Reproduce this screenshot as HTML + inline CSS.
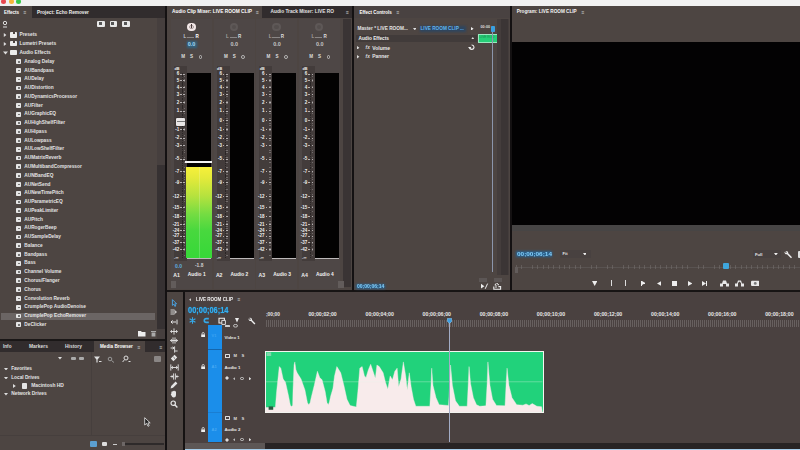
<!DOCTYPE html>
<html><head><meta charset="utf-8"><title>Premiere</title>
<style>
html,body{margin:0;padding:0;background:#4d4542;}
#app{position:relative;width:800px;height:450px;overflow:hidden;background:#4d4542;font-family:"Liberation Sans",sans-serif;}
#app div,#app span,#app svg{position:absolute;display:block;}
#app span{white-space:nowrap;}
</style></head><body><div id="app">
<div style="left:0.00px;top:0.00px;width:800.00px;height:5.60px;background:#f1f1f1;"></div>
<div style="left:0.50px;top:-1.00px;width:5.00px;height:5.00px;background:#e8484f;border-radius:50%;filter:blur(.4px);"></div>
<div style="left:8.50px;top:-1.00px;width:5.00px;height:5.00px;background:#f5b63a;border-radius:50%;filter:blur(.4px);"></div>
<div style="left:16.00px;top:-1.00px;width:5.00px;height:5.00px;background:#37c84a;border-radius:50%;filter:blur(.4px);"></div>
<div style="left:0.00px;top:5.60px;width:165.00px;height:12.00px;background:#312c2d;"></div>
<div style="left:0.00px;top:6.00px;width:32.00px;height:11.60px;background:#4d4542;"></div>
<div style="left:157.00px;top:17.60px;width:8.00px;height:321.00px;background:#463f3e;"></div>
<span style="left:4.00px;top:9.60px;font-size:4.50px;line-height:5.40px;color:#fff;font-weight:bold;">Effects</span>
<span style="left:23.50px;top:9.30px;font-size:5.00px;line-height:6.00px;color:#ccc;">≡</span>
<span style="left:37.00px;top:9.96px;font-size:4.73px;line-height:5.67px;color:#eee;font-weight:bold;">Project: Echo Remover</span>
<svg style="left:1.5px;top:20px" width="6" height="8" viewBox="0 0 6 8"><circle cx="3" cy="3" r="1.7" fill="none" stroke="#ddd" stroke-width="1"/><path d="M1 7h4" stroke="#ddd" stroke-width="1"/></svg>
<div style="left:97.00px;top:20.50px;width:7.50px;height:6.00px;background:#e8e8e8;border-radius:1px;"></div>
<div style="left:98.50px;top:22.00px;width:3.00px;height:2.50px;background:#555;"></div>
<div style="left:109.50px;top:20.50px;width:7.50px;height:6.00px;background:#e8e8e8;border-radius:1px;"></div>
<div style="left:111.00px;top:22.00px;width:3.00px;height:2.50px;background:#555;"></div>
<div style="left:122.00px;top:20.50px;width:7.50px;height:6.00px;background:#e8e8e8;border-radius:1px;"></div>
<div style="left:123.50px;top:22.00px;width:3.00px;height:2.50px;background:#555;"></div>
<span style="left:19.50px;top:32.29px;font-size:4.85px;line-height:5.82px;color:#e4e4e4;font-weight:bold;">Presets</span>
<div style="left:10.00px;top:32.40px;width:6.50px;height:5.20px;background:#ececec;border-radius:.8px;"></div>
<svg style="left:3px;top:33.20px" width="4" height="4" viewBox="0 0 4 4"><path d="M.8 0L3.4 2L.8 4z" fill="#ddd"/></svg>
<div style="left:12.50px;top:31.60px;width:2.00px;height:2.20px;background:#4d4542;"></div>
<span style="left:19.50px;top:41.06px;font-size:4.85px;line-height:5.82px;color:#e4e4e4;font-weight:bold;">Lumetri Presets</span>
<div style="left:10.00px;top:41.17px;width:6.50px;height:5.20px;background:#ececec;border-radius:.8px;"></div>
<svg style="left:3px;top:41.97px" width="4" height="4" viewBox="0 0 4 4"><path d="M.8 0L3.4 2L.8 4z" fill="#ddd"/></svg>
<div style="left:12.50px;top:40.37px;width:2.00px;height:2.20px;background:#4d4542;"></div>
<span style="left:19.50px;top:49.83px;font-size:4.85px;line-height:5.82px;color:#e4e4e4;font-weight:bold;">Audio Effects</span>
<div style="left:10.00px;top:49.94px;width:6.50px;height:5.20px;background:#ececec;border-radius:.8px;"></div>
<svg style="left:3px;top:51.14px" width="5" height="4" viewBox="0 0 5 4"><path d="M0 .5h5L2.5 3.6z" fill="#ddd"/></svg>
<span style="left:24.30px;top:58.73px;font-size:4.78px;line-height:5.74px;color:#e4e4e4;font-weight:bold;">Analog Delay</span>
<div style="left:16.30px;top:59.20px;width:4.60px;height:4.80px;background:#e6e6e6;border-radius:.8px;"></div>
<div style="left:17.50px;top:61.00px;width:2.20px;height:1.60px;background:#777;"></div>
<span style="left:24.30px;top:67.50px;font-size:4.78px;line-height:5.74px;color:#e4e4e4;font-weight:bold;">AUBandpass</span>
<div style="left:16.30px;top:67.97px;width:4.60px;height:4.80px;background:#e6e6e6;border-radius:.8px;"></div>
<div style="left:17.50px;top:69.77px;width:2.20px;height:1.60px;background:#777;"></div>
<span style="left:24.30px;top:76.27px;font-size:4.78px;line-height:5.74px;color:#e4e4e4;font-weight:bold;">AUDelay</span>
<div style="left:16.30px;top:76.74px;width:4.60px;height:4.80px;background:#e6e6e6;border-radius:.8px;"></div>
<div style="left:17.50px;top:78.54px;width:2.20px;height:1.60px;background:#777;"></div>
<span style="left:24.30px;top:85.04px;font-size:4.78px;line-height:5.74px;color:#e4e4e4;font-weight:bold;">AUDistortion</span>
<div style="left:16.30px;top:85.51px;width:4.60px;height:4.80px;background:#e6e6e6;border-radius:.8px;"></div>
<div style="left:17.50px;top:87.31px;width:2.20px;height:1.60px;background:#777;"></div>
<span style="left:24.30px;top:93.81px;font-size:4.78px;line-height:5.74px;color:#e4e4e4;font-weight:bold;">AUDynamicsProcessor</span>
<div style="left:16.30px;top:94.28px;width:4.60px;height:4.80px;background:#e6e6e6;border-radius:.8px;"></div>
<div style="left:17.50px;top:96.08px;width:2.20px;height:1.60px;background:#777;"></div>
<span style="left:24.30px;top:102.58px;font-size:4.78px;line-height:5.74px;color:#e4e4e4;font-weight:bold;">AUFilter</span>
<div style="left:16.30px;top:103.05px;width:4.60px;height:4.80px;background:#e6e6e6;border-radius:.8px;"></div>
<div style="left:17.50px;top:104.85px;width:2.20px;height:1.60px;background:#777;"></div>
<span style="left:24.30px;top:111.35px;font-size:4.78px;line-height:5.74px;color:#e4e4e4;font-weight:bold;">AUGraphicEQ</span>
<div style="left:16.30px;top:111.82px;width:4.60px;height:4.80px;background:#e6e6e6;border-radius:.8px;"></div>
<div style="left:17.50px;top:113.62px;width:2.20px;height:1.60px;background:#777;"></div>
<span style="left:24.30px;top:120.12px;font-size:4.78px;line-height:5.74px;color:#e4e4e4;font-weight:bold;">AUHighShelfFilter</span>
<div style="left:16.30px;top:120.59px;width:4.60px;height:4.80px;background:#e6e6e6;border-radius:.8px;"></div>
<div style="left:17.50px;top:122.39px;width:2.20px;height:1.60px;background:#777;"></div>
<span style="left:24.30px;top:128.89px;font-size:4.78px;line-height:5.74px;color:#e4e4e4;font-weight:bold;">AUHipass</span>
<div style="left:16.30px;top:129.36px;width:4.60px;height:4.80px;background:#e6e6e6;border-radius:.8px;"></div>
<div style="left:17.50px;top:131.16px;width:2.20px;height:1.60px;background:#777;"></div>
<span style="left:24.30px;top:137.66px;font-size:4.78px;line-height:5.74px;color:#e4e4e4;font-weight:bold;">AULowpass</span>
<div style="left:16.30px;top:138.13px;width:4.60px;height:4.80px;background:#e6e6e6;border-radius:.8px;"></div>
<div style="left:17.50px;top:139.93px;width:2.20px;height:1.60px;background:#777;"></div>
<span style="left:24.30px;top:146.43px;font-size:4.78px;line-height:5.74px;color:#e4e4e4;font-weight:bold;">AULowShelfFilter</span>
<div style="left:16.30px;top:146.90px;width:4.60px;height:4.80px;background:#e6e6e6;border-radius:.8px;"></div>
<div style="left:17.50px;top:148.70px;width:2.20px;height:1.60px;background:#777;"></div>
<span style="left:24.30px;top:155.20px;font-size:4.78px;line-height:5.74px;color:#e4e4e4;font-weight:bold;">AUMatrixReverb</span>
<div style="left:16.30px;top:155.67px;width:4.60px;height:4.80px;background:#e6e6e6;border-radius:.8px;"></div>
<div style="left:17.50px;top:157.47px;width:2.20px;height:1.60px;background:#777;"></div>
<span style="left:24.30px;top:163.97px;font-size:4.78px;line-height:5.74px;color:#e4e4e4;font-weight:bold;">AUMultibandCompressor</span>
<div style="left:16.30px;top:164.44px;width:4.60px;height:4.80px;background:#e6e6e6;border-radius:.8px;"></div>
<div style="left:17.50px;top:166.24px;width:2.20px;height:1.60px;background:#777;"></div>
<span style="left:24.30px;top:172.74px;font-size:4.78px;line-height:5.74px;color:#e4e4e4;font-weight:bold;">AUNBandEQ</span>
<div style="left:16.30px;top:173.21px;width:4.60px;height:4.80px;background:#e6e6e6;border-radius:.8px;"></div>
<div style="left:17.50px;top:175.01px;width:2.20px;height:1.60px;background:#777;"></div>
<span style="left:24.30px;top:181.51px;font-size:4.78px;line-height:5.74px;color:#e4e4e4;font-weight:bold;">AUNetSend</span>
<div style="left:16.30px;top:181.98px;width:4.60px;height:4.80px;background:#e6e6e6;border-radius:.8px;"></div>
<div style="left:17.50px;top:183.78px;width:2.20px;height:1.60px;background:#777;"></div>
<span style="left:24.30px;top:190.28px;font-size:4.78px;line-height:5.74px;color:#e4e4e4;font-weight:bold;">AUNewTimePitch</span>
<div style="left:16.30px;top:190.75px;width:4.60px;height:4.80px;background:#e6e6e6;border-radius:.8px;"></div>
<div style="left:17.50px;top:192.55px;width:2.20px;height:1.60px;background:#777;"></div>
<span style="left:24.30px;top:199.05px;font-size:4.78px;line-height:5.74px;color:#e4e4e4;font-weight:bold;">AUParametricEQ</span>
<div style="left:16.30px;top:199.52px;width:4.60px;height:4.80px;background:#e6e6e6;border-radius:.8px;"></div>
<div style="left:17.50px;top:201.32px;width:2.20px;height:1.60px;background:#777;"></div>
<span style="left:24.30px;top:207.82px;font-size:4.78px;line-height:5.74px;color:#e4e4e4;font-weight:bold;">AUPeakLimiter</span>
<div style="left:16.30px;top:208.29px;width:4.60px;height:4.80px;background:#e6e6e6;border-radius:.8px;"></div>
<div style="left:17.50px;top:210.09px;width:2.20px;height:1.60px;background:#777;"></div>
<span style="left:24.30px;top:216.59px;font-size:4.78px;line-height:5.74px;color:#e4e4e4;font-weight:bold;">AUPitch</span>
<div style="left:16.30px;top:217.06px;width:4.60px;height:4.80px;background:#e6e6e6;border-radius:.8px;"></div>
<div style="left:17.50px;top:218.86px;width:2.20px;height:1.60px;background:#777;"></div>
<span style="left:24.30px;top:225.36px;font-size:4.78px;line-height:5.74px;color:#e4e4e4;font-weight:bold;">AURogerBeep</span>
<div style="left:16.30px;top:225.83px;width:4.60px;height:4.80px;background:#e6e6e6;border-radius:.8px;"></div>
<div style="left:17.50px;top:227.63px;width:2.20px;height:1.60px;background:#777;"></div>
<span style="left:24.30px;top:234.13px;font-size:4.78px;line-height:5.74px;color:#e4e4e4;font-weight:bold;">AUSampleDelay</span>
<div style="left:16.30px;top:234.60px;width:4.60px;height:4.80px;background:#e6e6e6;border-radius:.8px;"></div>
<div style="left:17.50px;top:236.40px;width:2.20px;height:1.60px;background:#777;"></div>
<span style="left:24.30px;top:242.90px;font-size:4.78px;line-height:5.74px;color:#e4e4e4;font-weight:bold;">Balance</span>
<div style="left:16.30px;top:243.37px;width:4.60px;height:4.80px;background:#e6e6e6;border-radius:.8px;"></div>
<div style="left:17.50px;top:245.17px;width:2.20px;height:1.60px;background:#777;"></div>
<span style="left:24.30px;top:251.67px;font-size:4.78px;line-height:5.74px;color:#e4e4e4;font-weight:bold;">Bandpass</span>
<div style="left:16.30px;top:252.14px;width:4.60px;height:4.80px;background:#e6e6e6;border-radius:.8px;"></div>
<div style="left:17.50px;top:253.94px;width:2.20px;height:1.60px;background:#777;"></div>
<span style="left:24.30px;top:260.44px;font-size:4.78px;line-height:5.74px;color:#e4e4e4;font-weight:bold;">Bass</span>
<div style="left:16.30px;top:260.91px;width:4.60px;height:4.80px;background:#e6e6e6;border-radius:.8px;"></div>
<div style="left:17.50px;top:262.71px;width:2.20px;height:1.60px;background:#777;"></div>
<span style="left:24.30px;top:269.21px;font-size:4.78px;line-height:5.74px;color:#e4e4e4;font-weight:bold;">Channel Volume</span>
<div style="left:16.30px;top:269.68px;width:4.60px;height:4.80px;background:#e6e6e6;border-radius:.8px;"></div>
<div style="left:17.50px;top:271.48px;width:2.20px;height:1.60px;background:#777;"></div>
<span style="left:24.30px;top:277.98px;font-size:4.78px;line-height:5.74px;color:#e4e4e4;font-weight:bold;">Chorus/Flanger</span>
<div style="left:16.30px;top:278.45px;width:4.60px;height:4.80px;background:#e6e6e6;border-radius:.8px;"></div>
<div style="left:17.50px;top:280.25px;width:2.20px;height:1.60px;background:#777;"></div>
<span style="left:24.30px;top:286.75px;font-size:4.78px;line-height:5.74px;color:#e4e4e4;font-weight:bold;">Chorus</span>
<div style="left:16.30px;top:287.22px;width:4.60px;height:4.80px;background:#e6e6e6;border-radius:.8px;"></div>
<div style="left:17.50px;top:289.02px;width:2.20px;height:1.60px;background:#777;"></div>
<span style="left:24.30px;top:295.52px;font-size:4.78px;line-height:5.74px;color:#e4e4e4;font-weight:bold;">Convolution Reverb</span>
<div style="left:16.30px;top:295.99px;width:4.60px;height:4.80px;background:#e6e6e6;border-radius:.8px;"></div>
<div style="left:17.50px;top:297.79px;width:2.20px;height:1.60px;background:#777;"></div>
<span style="left:24.30px;top:304.29px;font-size:4.78px;line-height:5.74px;color:#e4e4e4;font-weight:bold;">CrumplePop AudioDenoise</span>
<div style="left:16.30px;top:304.76px;width:4.60px;height:4.80px;background:#e6e6e6;border-radius:.8px;"></div>
<div style="left:17.50px;top:306.56px;width:2.20px;height:1.60px;background:#777;"></div>
<div style="left:1.00px;top:312.53px;width:154.40px;height:7.00px;background:#6b6564;"></div>
<span style="left:24.30px;top:313.06px;font-size:4.78px;line-height:5.74px;color:#e4e4e4;font-weight:bold;">CrumplePop EchoRemover</span>
<div style="left:16.30px;top:313.53px;width:4.60px;height:4.80px;background:#e6e6e6;border-radius:.8px;"></div>
<div style="left:17.50px;top:315.33px;width:2.20px;height:1.60px;background:#777;"></div>
<span style="left:24.30px;top:321.83px;font-size:4.78px;line-height:5.74px;color:#e4e4e4;font-weight:bold;">DeClicker</span>
<div style="left:16.30px;top:322.30px;width:4.60px;height:4.80px;background:#e6e6e6;border-radius:.8px;"></div>
<div style="left:17.50px;top:324.10px;width:2.20px;height:1.60px;background:#777;"></div>
<div style="left:157.00px;top:165.00px;width:8.00px;height:163.60px;background:#363132;"></div>
<svg style="left:137.5px;top:329.5px" width="8" height="7" viewBox="0 0 8 7"><path d="M0 1h3l.8 1H7.5v4.5H0z" fill="#eee"/></svg>
<svg style="left:151px;top:329.5px" width="5" height="7" viewBox="0 0 5 7"><path d="M0 1h5v1H0zM.6 2.5h3.8v4H.6z" fill="#aaa"/></svg>
<div style="left:0.00px;top:338.60px;width:165.00px;height:2.40px;background:#1a1717;"></div>
<div style="left:0.00px;top:341.00px;width:165.00px;height:10.80px;background:#312c2d;"></div>
<div style="left:93.50px;top:341.00px;width:51.00px;height:10.80px;background:#4d4542;"></div>
<span style="left:3.00px;top:343.72px;font-size:4.64px;line-height:5.57px;color:#ddd;font-weight:bold;">Info</span>
<span style="left:29.00px;top:343.53px;font-size:4.95px;line-height:5.94px;color:#ddd;font-weight:bold;">Markers</span>
<span style="left:65.00px;top:343.54px;font-size:4.93px;line-height:5.92px;color:#ddd;font-weight:bold;">History</span>
<span style="left:100.00px;top:343.72px;font-size:4.64px;line-height:5.57px;color:#fff;font-weight:bold;">Media Browser</span>
<span style="left:137.50px;top:343.50px;font-size:5.00px;line-height:6.00px;color:#ccc;">≡</span>
<span style="left:159.50px;top:343.50px;font-size:5.00px;line-height:6.00px;color:#ccc;">≡</span>
<svg style="left:58.00px;top:357.30px" width="4" height="2.6" viewBox="0 0 4 2.6"><path d="M0 0h4L2.0 2.6z" fill="#ddd"/></svg>
<div style="left:70.50px;top:357.30px;width:5.00px;height:2.60px;background:#aaa;border-radius:1px;"></div>
<div style="left:78.50px;top:357.30px;width:5.00px;height:2.60px;background:#aaa;border-radius:1px;"></div>
<svg style="left:93.5px;top:355.5px" width="8" height="7" viewBox="0 0 8 7"><path d="M0 .5h6L3.6 3.4V6.5H2.4V3.4z" fill="#ddd"/><path d="M5 5.5h2.5" stroke="#ddd"/></svg>
<svg style="left:107px;top:355.5px" width="8" height="7" viewBox="0 0 8 7"><circle cx="3" cy="3" r="1.8" fill="none" stroke="#999" stroke-width="1"/><path d="M4.5 4.5L7 6.5" stroke="#999"/></svg>
<svg style="left:122px;top:355px" width="9" height="8" viewBox="0 0 9 8"><circle cx="4" cy="3" r="2" fill="none" stroke="#ddd" stroke-width="1"/><path d="M2.6 4.6L.6 7M6.5 6.5h2" stroke="#ddd"/></svg>
<div style="left:153.50px;top:355.50px;width:7.00px;height:6.00px;background:#8a8685;border-radius:1px;"></div>
<svg style="left:3.90px;top:367.90px" width="4" height="2.6" viewBox="0 0 4 2.6"><path d="M0 0h4L2.0 2.6z" fill="#ddd"/></svg>
<span style="left:11.20px;top:366.19px;font-size:4.68px;line-height:5.61px;color:#e4e4e4;font-weight:bold;">Favorites</span>
<svg style="left:3.90px;top:376.50px" width="4" height="2.6" viewBox="0 0 4 2.6"><path d="M0 0h4L2.0 2.6z" fill="#ddd"/></svg>
<span style="left:11.20px;top:374.74px;font-size:4.76px;line-height:5.71px;color:#e4e4e4;font-weight:bold;">Local Drives</span>
<svg style="left:13.30px;top:384.20px" width="2.8" height="4" viewBox="0 0 2.8 4"><path d="M0 0L2.8 2.0L0 4z" fill="#ddd"/></svg>
<div style="left:21.60px;top:383.40px;width:5.60px;height:5.60px;background:#e4e4e4;border-radius:.8px;"></div>
<span style="left:31.20px;top:383.25px;font-size:4.92px;line-height:5.90px;color:#e4e4e4;font-weight:bold;">Macintosh HD</span>
<svg style="left:3.90px;top:393.10px" width="4" height="2.6" viewBox="0 0 4 2.6"><path d="M0 0h4L2.0 2.6z" fill="#ddd"/></svg>
<span style="left:11.20px;top:391.27px;font-size:4.88px;line-height:5.85px;color:#e4e4e4;font-weight:bold;">Network Drives</span>
<svg style="left:144px;top:417px" width="7" height="10" viewBox="0 0 7 10"><path d="M.7 .7V8L2.6 6.3L4 9.3L5.2 8.7L3.9 5.9H6.2z" fill="#222" stroke="#eee" stroke-width=".8"/></svg>
<div style="left:0.00px;top:435.20px;width:165.00px;height:0.80px;background:#463f3d;"></div>
<div style="left:91.40px;top:352.00px;width:0.80px;height:83.00px;background:#463f3d;"></div>
<div style="left:90.00px;top:441.00px;width:6.50px;height:5.50px;background:#5b9fd0;border-radius:1px;"></div>
<div style="left:102.00px;top:441.60px;width:5.00px;height:4.50px;background:#ddd;border-radius:1px;"></div>
<div style="left:113.00px;top:443.60px;width:3.50px;height:1.00px;background:#ccc;"></div>
<div style="left:121.50px;top:441.80px;width:3.50px;height:4.40px;background:#6d6766;"></div>
<div style="left:125.00px;top:443.40px;width:39.00px;height:1.50px;background:#2e2a2a;"></div>
<div style="left:165.00px;top:5.60px;width:2.00px;height:444.40px;background:#141112;"></div>
<div style="left:167.00px;top:5.60px;width:185.50px;height:12.00px;background:#312c2d;"></div>
<div style="left:167.00px;top:6.00px;width:95.00px;height:11.60px;background:#4d4542;"></div>
<span style="left:172.00px;top:9.42px;font-size:4.80px;line-height:5.76px;color:#fff;font-weight:bold;">Audio Clip Mixer: LIVE ROOM CLIP</span>
<span style="left:256.00px;top:9.30px;font-size:5.00px;line-height:6.00px;color:#ccc;">≡</span>
<span style="left:270.50px;top:9.42px;font-size:4.80px;line-height:5.76px;color:#e2e2e2;font-weight:bold;">Audio Track Mixer: LIVE RO</span>
<span style="left:346.00px;top:9.30px;font-size:5.00px;line-height:6.00px;color:#ccc;">≡</span>
<div style="left:342.50px;top:19.00px;width:8.00px;height:268.00px;background:#3a3434;"></div>
<div style="left:171.00px;top:19.00px;width:41.00px;height:270.00px;background:#4e4746;"></div>
<div style="left:187.30px;top:22.90px;width:8.60px;height:8.60px;background:#f4e9e9;border-radius:50%;"></div>
<div style="left:189.30px;top:24.90px;width:4.60px;height:4.60px;background:transparent;border:.7px solid #a89c9c;border-radius:50%;box-sizing:border-box;"></div>
<div style="left:191.10px;top:23.80px;width:1.00px;height:3.80px;background:#4a3c3c;"></div>
<div style="left:186.50px;top:40.60px;width:10.50px;height:7.00px;background:rgba(40,110,150,.75);filter:blur(.9px);"></div>
<span style="left:183.40px;top:33.84px;font-size:4.60px;line-height:5.52px;color:#c4d2dc;font-weight:bold;">L</span>
<div style="left:186.80px;top:37.30px;width:7.60px;height:0.70px;background:#8a8686;"></div>
<span style="left:195.40px;top:33.84px;font-size:4.60px;line-height:5.52px;color:#ffffff;font-weight:bold;">R</span>
<span style="left:187.80px;top:40.72px;font-size:5.47px;line-height:6.56px;color:#a8d8f4;font-weight:bold;">0.0</span>
<span style="left:181.20px;top:54.24px;font-size:4.60px;line-height:5.52px;color:#ddd;font-weight:bold;">M</span>
<span style="left:190.00px;top:54.24px;font-size:4.60px;line-height:5.52px;color:#ddd;font-weight:bold;">S</span>
<div style="left:198.60px;top:55.10px;width:3.80px;height:3.80px;background:transparent;border:.8px solid #bbb;border-radius:50%;box-sizing:border-box;"></div>
<div style="left:187.00px;top:73.40px;width:24.00px;height:184.80px;background:#030202;"></div>
<div style="left:174.00px;top:66.00px;width:13.00px;height:195.00px;background:#433c3b;"></div>
<span style="left:174.40px;top:66.92px;font-size:3.80px;line-height:4.56px;color:#eeeeee;font-weight:bold;">dB</span>
<div style="left:182.10px;top:73px;width:.9px;height:185px;background:repeating-linear-gradient(180deg,#2a2525 0 1.4px,transparent 1.4px 2.3px);"></div>
<span style="left:176.70px;top:71.30px;font-size:4.50px;line-height:5.40px;color:#f0f0f0;font-weight:bold;">6</span>
<div style="left:180.10px;top:73.65px;width:1.70px;height:0.70px;background:#b5b1b1;"></div>
<div style="left:183.40px;top:73.65px;width:1.80px;height:0.70px;background:#b5b1b1;"></div>
<span style="left:176.70px;top:77.80px;font-size:4.50px;line-height:5.40px;color:#f0f0f0;font-weight:bold;">5</span>
<div style="left:180.10px;top:80.15px;width:1.70px;height:0.70px;background:#b5b1b1;"></div>
<div style="left:183.40px;top:80.15px;width:1.80px;height:0.70px;background:#b5b1b1;"></div>
<span style="left:176.70px;top:84.50px;font-size:4.50px;line-height:5.40px;color:#f0f0f0;font-weight:bold;">4</span>
<div style="left:180.10px;top:86.85px;width:1.70px;height:0.70px;background:#b5b1b1;"></div>
<div style="left:183.40px;top:86.85px;width:1.80px;height:0.70px;background:#b5b1b1;"></div>
<span style="left:176.70px;top:91.90px;font-size:4.50px;line-height:5.40px;color:#f0f0f0;font-weight:bold;">3</span>
<div style="left:180.10px;top:94.25px;width:1.70px;height:0.70px;background:#b5b1b1;"></div>
<div style="left:183.40px;top:94.25px;width:1.80px;height:0.70px;background:#b5b1b1;"></div>
<span style="left:176.70px;top:99.80px;font-size:4.50px;line-height:5.40px;color:#f0f0f0;font-weight:bold;">2</span>
<div style="left:180.10px;top:102.15px;width:1.70px;height:0.70px;background:#b5b1b1;"></div>
<div style="left:183.40px;top:102.15px;width:1.80px;height:0.70px;background:#b5b1b1;"></div>
<span style="left:176.70px;top:108.30px;font-size:4.50px;line-height:5.40px;color:#f0f0f0;font-weight:bold;">1</span>
<div style="left:180.10px;top:110.65px;width:1.70px;height:0.70px;background:#b5b1b1;"></div>
<div style="left:183.40px;top:110.65px;width:1.80px;height:0.70px;background:#b5b1b1;"></div>
<span style="left:176.70px;top:117.90px;font-size:4.50px;line-height:5.40px;color:#f0f0f0;font-weight:bold;">0</span>
<div style="left:180.10px;top:120.25px;width:1.70px;height:0.70px;background:#b5b1b1;"></div>
<div style="left:183.40px;top:120.25px;width:1.80px;height:0.70px;background:#b5b1b1;"></div>
<span style="left:175.20px;top:126.60px;font-size:4.50px;line-height:5.40px;color:#f0f0f0;font-weight:bold;">-1</span>
<div style="left:180.10px;top:128.95px;width:1.70px;height:0.70px;background:#b5b1b1;"></div>
<div style="left:183.40px;top:128.95px;width:1.80px;height:0.70px;background:#b5b1b1;"></div>
<span style="left:175.20px;top:135.30px;font-size:4.50px;line-height:5.40px;color:#f0f0f0;font-weight:bold;">-2</span>
<div style="left:180.10px;top:137.65px;width:1.70px;height:0.70px;background:#b5b1b1;"></div>
<div style="left:183.40px;top:137.65px;width:1.80px;height:0.70px;background:#b5b1b1;"></div>
<span style="left:175.20px;top:142.80px;font-size:4.50px;line-height:5.40px;color:#f0f0f0;font-weight:bold;">-3</span>
<div style="left:180.10px;top:145.15px;width:1.70px;height:0.70px;background:#b5b1b1;"></div>
<div style="left:183.40px;top:145.15px;width:1.80px;height:0.70px;background:#b5b1b1;"></div>
<span style="left:175.20px;top:156.30px;font-size:4.50px;line-height:5.40px;color:#f0f0f0;font-weight:bold;">-5</span>
<div style="left:180.10px;top:158.65px;width:1.70px;height:0.70px;background:#b5b1b1;"></div>
<div style="left:183.40px;top:158.65px;width:1.80px;height:0.70px;background:#b5b1b1;"></div>
<span style="left:175.20px;top:169.00px;font-size:4.50px;line-height:5.40px;color:#f0f0f0;font-weight:bold;">-7</span>
<div style="left:180.10px;top:171.35px;width:1.70px;height:0.70px;background:#b5b1b1;"></div>
<div style="left:183.40px;top:171.35px;width:1.80px;height:0.70px;background:#b5b1b1;"></div>
<span style="left:175.20px;top:180.10px;font-size:4.50px;line-height:5.40px;color:#f0f0f0;font-weight:bold;">-9</span>
<div style="left:180.10px;top:182.45px;width:1.70px;height:0.70px;background:#b5b1b1;"></div>
<div style="left:183.40px;top:182.45px;width:1.80px;height:0.70px;background:#b5b1b1;"></div>
<span style="left:172.70px;top:193.70px;font-size:4.50px;line-height:5.40px;color:#f0f0f0;font-weight:bold;">-12</span>
<div style="left:180.10px;top:196.05px;width:1.70px;height:0.70px;background:#b5b1b1;"></div>
<div style="left:183.40px;top:196.05px;width:1.80px;height:0.70px;background:#b5b1b1;"></div>
<span style="left:172.70px;top:205.10px;font-size:4.50px;line-height:5.40px;color:#f0f0f0;font-weight:bold;">-15</span>
<div style="left:180.10px;top:207.45px;width:1.70px;height:0.70px;background:#b5b1b1;"></div>
<div style="left:183.40px;top:207.45px;width:1.80px;height:0.70px;background:#b5b1b1;"></div>
<span style="left:172.70px;top:214.10px;font-size:4.50px;line-height:5.40px;color:#f0f0f0;font-weight:bold;">-18</span>
<div style="left:180.10px;top:216.45px;width:1.70px;height:0.70px;background:#b5b1b1;"></div>
<div style="left:183.40px;top:216.45px;width:1.80px;height:0.70px;background:#b5b1b1;"></div>
<span style="left:172.70px;top:221.70px;font-size:4.50px;line-height:5.40px;color:#f0f0f0;font-weight:bold;">-21</span>
<div style="left:180.10px;top:224.05px;width:1.70px;height:0.70px;background:#b5b1b1;"></div>
<div style="left:183.40px;top:224.05px;width:1.80px;height:0.70px;background:#b5b1b1;"></div>
<span style="left:172.70px;top:227.70px;font-size:4.50px;line-height:5.40px;color:#f0f0f0;font-weight:bold;">-24</span>
<div style="left:180.10px;top:230.05px;width:1.70px;height:0.70px;background:#b5b1b1;"></div>
<div style="left:183.40px;top:230.05px;width:1.80px;height:0.70px;background:#b5b1b1;"></div>
<span style="left:172.70px;top:233.30px;font-size:4.50px;line-height:5.40px;color:#f0f0f0;font-weight:bold;">-27</span>
<div style="left:180.10px;top:235.65px;width:1.70px;height:0.70px;background:#b5b1b1;"></div>
<div style="left:183.40px;top:235.65px;width:1.80px;height:0.70px;background:#b5b1b1;"></div>
<span style="left:172.70px;top:239.80px;font-size:4.50px;line-height:5.40px;color:#f0f0f0;font-weight:bold;">-37</span>
<div style="left:180.10px;top:242.15px;width:1.70px;height:0.70px;background:#b5b1b1;"></div>
<div style="left:183.40px;top:242.15px;width:1.80px;height:0.70px;background:#b5b1b1;"></div>
<span style="left:172.70px;top:246.90px;font-size:4.50px;line-height:5.40px;color:#f0f0f0;font-weight:bold;">-42</span>
<div style="left:180.10px;top:249.25px;width:1.70px;height:0.70px;background:#b5b1b1;"></div>
<div style="left:183.40px;top:249.25px;width:1.80px;height:0.70px;background:#b5b1b1;"></div>
<span style="left:174.00px;top:255.48px;font-size:4.20px;line-height:5.04px;color:#eee;font-weight:bold;">-∞</span>
<div style="left:183.60px;top:74px;width:1.6px;height:184px;background:repeating-linear-gradient(180deg,rgba(170,166,166,.45) 0 .6px,transparent .6px 2.45px);"></div>
<div style="left:187.00px;top:258.20px;width:24.00px;height:0.90px;background:#bdb9b9;"></div>
<span style="left:173.20px;top:271.90px;font-size:5.16px;line-height:6.20px;color:#eee;font-weight:bold;">A1</span>
<span style="left:187.80px;top:271.59px;font-size:4.86px;line-height:5.83px;color:#f2f2f2;font-weight:bold;">Audio 1</span>
<div style="left:213.70px;top:19.00px;width:41.00px;height:270.00px;background:#4e4746;"></div>
<div style="left:229.50px;top:22.80px;width:8.40px;height:8.40px;background:#5e5857;border-radius:50%;"></div>
<div style="left:231.50px;top:24.80px;width:4.40px;height:4.40px;background:#544e4d;border-radius:50%;"></div>
<span style="left:226.10px;top:33.84px;font-size:4.60px;line-height:5.52px;color:#a8a4a4;font-weight:bold;">L</span>
<div style="left:229.50px;top:37.30px;width:7.60px;height:0.70px;background:#8a8686;"></div>
<span style="left:238.10px;top:33.84px;font-size:4.60px;line-height:5.52px;color:#dcdcdc;font-weight:bold;">R</span>
<span style="left:230.50px;top:40.72px;font-size:5.47px;line-height:6.56px;color:#c8c8c8;font-weight:bold;">0.0</span>
<span style="left:223.90px;top:54.24px;font-size:4.60px;line-height:5.52px;color:#ddd;font-weight:bold;">M</span>
<span style="left:232.70px;top:54.24px;font-size:4.60px;line-height:5.52px;color:#ddd;font-weight:bold;">S</span>
<div style="left:241.30px;top:55.10px;width:3.80px;height:3.80px;background:transparent;border:.8px solid #bbb;border-radius:50%;box-sizing:border-box;"></div>
<div style="left:229.70px;top:73.40px;width:24.00px;height:184.80px;background:#030202;"></div>
<div style="left:216.70px;top:66.00px;width:13.00px;height:195.00px;background:#433c3b;"></div>
<span style="left:217.10px;top:66.92px;font-size:3.80px;line-height:4.56px;color:#eeeeee;font-weight:bold;">dB</span>
<div style="left:224.80px;top:73px;width:.9px;height:185px;background:repeating-linear-gradient(180deg,#2a2525 0 1.4px,transparent 1.4px 2.3px);"></div>
<span style="left:219.40px;top:71.30px;font-size:4.50px;line-height:5.40px;color:#f0f0f0;font-weight:bold;">6</span>
<div style="left:222.80px;top:73.65px;width:1.70px;height:0.70px;background:#b5b1b1;"></div>
<div style="left:226.10px;top:73.65px;width:1.80px;height:0.70px;background:#b5b1b1;"></div>
<span style="left:219.40px;top:77.80px;font-size:4.50px;line-height:5.40px;color:#f0f0f0;font-weight:bold;">5</span>
<div style="left:222.80px;top:80.15px;width:1.70px;height:0.70px;background:#b5b1b1;"></div>
<div style="left:226.10px;top:80.15px;width:1.80px;height:0.70px;background:#b5b1b1;"></div>
<span style="left:219.40px;top:84.50px;font-size:4.50px;line-height:5.40px;color:#f0f0f0;font-weight:bold;">4</span>
<div style="left:222.80px;top:86.85px;width:1.70px;height:0.70px;background:#b5b1b1;"></div>
<div style="left:226.10px;top:86.85px;width:1.80px;height:0.70px;background:#b5b1b1;"></div>
<span style="left:219.40px;top:91.90px;font-size:4.50px;line-height:5.40px;color:#f0f0f0;font-weight:bold;">3</span>
<div style="left:222.80px;top:94.25px;width:1.70px;height:0.70px;background:#b5b1b1;"></div>
<div style="left:226.10px;top:94.25px;width:1.80px;height:0.70px;background:#b5b1b1;"></div>
<span style="left:219.40px;top:99.80px;font-size:4.50px;line-height:5.40px;color:#f0f0f0;font-weight:bold;">2</span>
<div style="left:222.80px;top:102.15px;width:1.70px;height:0.70px;background:#b5b1b1;"></div>
<div style="left:226.10px;top:102.15px;width:1.80px;height:0.70px;background:#b5b1b1;"></div>
<span style="left:219.40px;top:108.30px;font-size:4.50px;line-height:5.40px;color:#f0f0f0;font-weight:bold;">1</span>
<div style="left:222.80px;top:110.65px;width:1.70px;height:0.70px;background:#b5b1b1;"></div>
<div style="left:226.10px;top:110.65px;width:1.80px;height:0.70px;background:#b5b1b1;"></div>
<span style="left:219.40px;top:117.90px;font-size:4.50px;line-height:5.40px;color:#f0f0f0;font-weight:bold;">0</span>
<div style="left:222.80px;top:120.25px;width:1.70px;height:0.70px;background:#b5b1b1;"></div>
<div style="left:226.10px;top:120.25px;width:1.80px;height:0.70px;background:#b5b1b1;"></div>
<span style="left:217.90px;top:126.60px;font-size:4.50px;line-height:5.40px;color:#f0f0f0;font-weight:bold;">-1</span>
<div style="left:222.80px;top:128.95px;width:1.70px;height:0.70px;background:#b5b1b1;"></div>
<div style="left:226.10px;top:128.95px;width:1.80px;height:0.70px;background:#b5b1b1;"></div>
<span style="left:217.90px;top:135.30px;font-size:4.50px;line-height:5.40px;color:#f0f0f0;font-weight:bold;">-2</span>
<div style="left:222.80px;top:137.65px;width:1.70px;height:0.70px;background:#b5b1b1;"></div>
<div style="left:226.10px;top:137.65px;width:1.80px;height:0.70px;background:#b5b1b1;"></div>
<span style="left:217.90px;top:142.80px;font-size:4.50px;line-height:5.40px;color:#f0f0f0;font-weight:bold;">-3</span>
<div style="left:222.80px;top:145.15px;width:1.70px;height:0.70px;background:#b5b1b1;"></div>
<div style="left:226.10px;top:145.15px;width:1.80px;height:0.70px;background:#b5b1b1;"></div>
<span style="left:217.90px;top:156.30px;font-size:4.50px;line-height:5.40px;color:#f0f0f0;font-weight:bold;">-5</span>
<div style="left:222.80px;top:158.65px;width:1.70px;height:0.70px;background:#b5b1b1;"></div>
<div style="left:226.10px;top:158.65px;width:1.80px;height:0.70px;background:#b5b1b1;"></div>
<span style="left:217.90px;top:169.00px;font-size:4.50px;line-height:5.40px;color:#f0f0f0;font-weight:bold;">-7</span>
<div style="left:222.80px;top:171.35px;width:1.70px;height:0.70px;background:#b5b1b1;"></div>
<div style="left:226.10px;top:171.35px;width:1.80px;height:0.70px;background:#b5b1b1;"></div>
<span style="left:217.90px;top:180.10px;font-size:4.50px;line-height:5.40px;color:#f0f0f0;font-weight:bold;">-9</span>
<div style="left:222.80px;top:182.45px;width:1.70px;height:0.70px;background:#b5b1b1;"></div>
<div style="left:226.10px;top:182.45px;width:1.80px;height:0.70px;background:#b5b1b1;"></div>
<span style="left:215.40px;top:193.70px;font-size:4.50px;line-height:5.40px;color:#f0f0f0;font-weight:bold;">-12</span>
<div style="left:222.80px;top:196.05px;width:1.70px;height:0.70px;background:#b5b1b1;"></div>
<div style="left:226.10px;top:196.05px;width:1.80px;height:0.70px;background:#b5b1b1;"></div>
<span style="left:215.40px;top:205.10px;font-size:4.50px;line-height:5.40px;color:#f0f0f0;font-weight:bold;">-15</span>
<div style="left:222.80px;top:207.45px;width:1.70px;height:0.70px;background:#b5b1b1;"></div>
<div style="left:226.10px;top:207.45px;width:1.80px;height:0.70px;background:#b5b1b1;"></div>
<span style="left:215.40px;top:214.10px;font-size:4.50px;line-height:5.40px;color:#f0f0f0;font-weight:bold;">-18</span>
<div style="left:222.80px;top:216.45px;width:1.70px;height:0.70px;background:#b5b1b1;"></div>
<div style="left:226.10px;top:216.45px;width:1.80px;height:0.70px;background:#b5b1b1;"></div>
<span style="left:215.40px;top:221.70px;font-size:4.50px;line-height:5.40px;color:#f0f0f0;font-weight:bold;">-21</span>
<div style="left:222.80px;top:224.05px;width:1.70px;height:0.70px;background:#b5b1b1;"></div>
<div style="left:226.10px;top:224.05px;width:1.80px;height:0.70px;background:#b5b1b1;"></div>
<span style="left:215.40px;top:227.70px;font-size:4.50px;line-height:5.40px;color:#f0f0f0;font-weight:bold;">-24</span>
<div style="left:222.80px;top:230.05px;width:1.70px;height:0.70px;background:#b5b1b1;"></div>
<div style="left:226.10px;top:230.05px;width:1.80px;height:0.70px;background:#b5b1b1;"></div>
<span style="left:215.40px;top:233.30px;font-size:4.50px;line-height:5.40px;color:#f0f0f0;font-weight:bold;">-27</span>
<div style="left:222.80px;top:235.65px;width:1.70px;height:0.70px;background:#b5b1b1;"></div>
<div style="left:226.10px;top:235.65px;width:1.80px;height:0.70px;background:#b5b1b1;"></div>
<span style="left:215.40px;top:239.80px;font-size:4.50px;line-height:5.40px;color:#f0f0f0;font-weight:bold;">-37</span>
<div style="left:222.80px;top:242.15px;width:1.70px;height:0.70px;background:#b5b1b1;"></div>
<div style="left:226.10px;top:242.15px;width:1.80px;height:0.70px;background:#b5b1b1;"></div>
<span style="left:215.40px;top:246.90px;font-size:4.50px;line-height:5.40px;color:#f0f0f0;font-weight:bold;">-42</span>
<div style="left:222.80px;top:249.25px;width:1.70px;height:0.70px;background:#b5b1b1;"></div>
<div style="left:226.10px;top:249.25px;width:1.80px;height:0.70px;background:#b5b1b1;"></div>
<span style="left:216.70px;top:255.48px;font-size:4.20px;line-height:5.04px;color:#eee;font-weight:bold;">-∞</span>
<div style="left:226.30px;top:74px;width:1.6px;height:184px;background:repeating-linear-gradient(180deg,rgba(170,166,166,.45) 0 .6px,transparent .6px 2.45px);"></div>
<div style="left:229.70px;top:258.20px;width:24.00px;height:0.90px;background:#bdb9b9;"></div>
<span style="left:215.90px;top:271.90px;font-size:5.16px;line-height:6.20px;color:#eee;font-weight:bold;">A2</span>
<span style="left:230.50px;top:271.59px;font-size:4.86px;line-height:5.83px;color:#f2f2f2;font-weight:bold;">Audio 2</span>
<div style="left:256.40px;top:19.00px;width:41.00px;height:270.00px;background:#4e4746;"></div>
<div style="left:272.20px;top:22.80px;width:8.40px;height:8.40px;background:#5e5857;border-radius:50%;"></div>
<div style="left:274.20px;top:24.80px;width:4.40px;height:4.40px;background:#544e4d;border-radius:50%;"></div>
<span style="left:268.80px;top:33.84px;font-size:4.60px;line-height:5.52px;color:#a8a4a4;font-weight:bold;">L</span>
<div style="left:272.20px;top:37.30px;width:7.60px;height:0.70px;background:#8a8686;"></div>
<span style="left:280.80px;top:33.84px;font-size:4.60px;line-height:5.52px;color:#dcdcdc;font-weight:bold;">R</span>
<span style="left:273.20px;top:40.72px;font-size:5.47px;line-height:6.56px;color:#c8c8c8;font-weight:bold;">0.0</span>
<span style="left:266.60px;top:54.24px;font-size:4.60px;line-height:5.52px;color:#ddd;font-weight:bold;">M</span>
<span style="left:275.40px;top:54.24px;font-size:4.60px;line-height:5.52px;color:#ddd;font-weight:bold;">S</span>
<div style="left:284.00px;top:55.10px;width:3.80px;height:3.80px;background:transparent;border:.8px solid #bbb;border-radius:50%;box-sizing:border-box;"></div>
<div style="left:272.40px;top:73.40px;width:24.00px;height:184.80px;background:#030202;"></div>
<div style="left:259.40px;top:66.00px;width:13.00px;height:195.00px;background:#433c3b;"></div>
<span style="left:259.80px;top:66.92px;font-size:3.80px;line-height:4.56px;color:#eeeeee;font-weight:bold;">dB</span>
<div style="left:267.50px;top:73px;width:.9px;height:185px;background:repeating-linear-gradient(180deg,#2a2525 0 1.4px,transparent 1.4px 2.3px);"></div>
<span style="left:262.10px;top:71.30px;font-size:4.50px;line-height:5.40px;color:#f0f0f0;font-weight:bold;">6</span>
<div style="left:265.50px;top:73.65px;width:1.70px;height:0.70px;background:#b5b1b1;"></div>
<div style="left:268.80px;top:73.65px;width:1.80px;height:0.70px;background:#b5b1b1;"></div>
<span style="left:262.10px;top:77.80px;font-size:4.50px;line-height:5.40px;color:#f0f0f0;font-weight:bold;">5</span>
<div style="left:265.50px;top:80.15px;width:1.70px;height:0.70px;background:#b5b1b1;"></div>
<div style="left:268.80px;top:80.15px;width:1.80px;height:0.70px;background:#b5b1b1;"></div>
<span style="left:262.10px;top:84.50px;font-size:4.50px;line-height:5.40px;color:#f0f0f0;font-weight:bold;">4</span>
<div style="left:265.50px;top:86.85px;width:1.70px;height:0.70px;background:#b5b1b1;"></div>
<div style="left:268.80px;top:86.85px;width:1.80px;height:0.70px;background:#b5b1b1;"></div>
<span style="left:262.10px;top:91.90px;font-size:4.50px;line-height:5.40px;color:#f0f0f0;font-weight:bold;">3</span>
<div style="left:265.50px;top:94.25px;width:1.70px;height:0.70px;background:#b5b1b1;"></div>
<div style="left:268.80px;top:94.25px;width:1.80px;height:0.70px;background:#b5b1b1;"></div>
<span style="left:262.10px;top:99.80px;font-size:4.50px;line-height:5.40px;color:#f0f0f0;font-weight:bold;">2</span>
<div style="left:265.50px;top:102.15px;width:1.70px;height:0.70px;background:#b5b1b1;"></div>
<div style="left:268.80px;top:102.15px;width:1.80px;height:0.70px;background:#b5b1b1;"></div>
<span style="left:262.10px;top:108.30px;font-size:4.50px;line-height:5.40px;color:#f0f0f0;font-weight:bold;">1</span>
<div style="left:265.50px;top:110.65px;width:1.70px;height:0.70px;background:#b5b1b1;"></div>
<div style="left:268.80px;top:110.65px;width:1.80px;height:0.70px;background:#b5b1b1;"></div>
<span style="left:262.10px;top:117.90px;font-size:4.50px;line-height:5.40px;color:#f0f0f0;font-weight:bold;">0</span>
<div style="left:265.50px;top:120.25px;width:1.70px;height:0.70px;background:#b5b1b1;"></div>
<div style="left:268.80px;top:120.25px;width:1.80px;height:0.70px;background:#b5b1b1;"></div>
<span style="left:260.60px;top:126.60px;font-size:4.50px;line-height:5.40px;color:#f0f0f0;font-weight:bold;">-1</span>
<div style="left:265.50px;top:128.95px;width:1.70px;height:0.70px;background:#b5b1b1;"></div>
<div style="left:268.80px;top:128.95px;width:1.80px;height:0.70px;background:#b5b1b1;"></div>
<span style="left:260.60px;top:135.30px;font-size:4.50px;line-height:5.40px;color:#f0f0f0;font-weight:bold;">-2</span>
<div style="left:265.50px;top:137.65px;width:1.70px;height:0.70px;background:#b5b1b1;"></div>
<div style="left:268.80px;top:137.65px;width:1.80px;height:0.70px;background:#b5b1b1;"></div>
<span style="left:260.60px;top:142.80px;font-size:4.50px;line-height:5.40px;color:#f0f0f0;font-weight:bold;">-3</span>
<div style="left:265.50px;top:145.15px;width:1.70px;height:0.70px;background:#b5b1b1;"></div>
<div style="left:268.80px;top:145.15px;width:1.80px;height:0.70px;background:#b5b1b1;"></div>
<span style="left:260.60px;top:156.30px;font-size:4.50px;line-height:5.40px;color:#f0f0f0;font-weight:bold;">-5</span>
<div style="left:265.50px;top:158.65px;width:1.70px;height:0.70px;background:#b5b1b1;"></div>
<div style="left:268.80px;top:158.65px;width:1.80px;height:0.70px;background:#b5b1b1;"></div>
<span style="left:260.60px;top:169.00px;font-size:4.50px;line-height:5.40px;color:#f0f0f0;font-weight:bold;">-7</span>
<div style="left:265.50px;top:171.35px;width:1.70px;height:0.70px;background:#b5b1b1;"></div>
<div style="left:268.80px;top:171.35px;width:1.80px;height:0.70px;background:#b5b1b1;"></div>
<span style="left:260.60px;top:180.10px;font-size:4.50px;line-height:5.40px;color:#f0f0f0;font-weight:bold;">-9</span>
<div style="left:265.50px;top:182.45px;width:1.70px;height:0.70px;background:#b5b1b1;"></div>
<div style="left:268.80px;top:182.45px;width:1.80px;height:0.70px;background:#b5b1b1;"></div>
<span style="left:258.10px;top:193.70px;font-size:4.50px;line-height:5.40px;color:#f0f0f0;font-weight:bold;">-12</span>
<div style="left:265.50px;top:196.05px;width:1.70px;height:0.70px;background:#b5b1b1;"></div>
<div style="left:268.80px;top:196.05px;width:1.80px;height:0.70px;background:#b5b1b1;"></div>
<span style="left:258.10px;top:205.10px;font-size:4.50px;line-height:5.40px;color:#f0f0f0;font-weight:bold;">-15</span>
<div style="left:265.50px;top:207.45px;width:1.70px;height:0.70px;background:#b5b1b1;"></div>
<div style="left:268.80px;top:207.45px;width:1.80px;height:0.70px;background:#b5b1b1;"></div>
<span style="left:258.10px;top:214.10px;font-size:4.50px;line-height:5.40px;color:#f0f0f0;font-weight:bold;">-18</span>
<div style="left:265.50px;top:216.45px;width:1.70px;height:0.70px;background:#b5b1b1;"></div>
<div style="left:268.80px;top:216.45px;width:1.80px;height:0.70px;background:#b5b1b1;"></div>
<span style="left:258.10px;top:221.70px;font-size:4.50px;line-height:5.40px;color:#f0f0f0;font-weight:bold;">-21</span>
<div style="left:265.50px;top:224.05px;width:1.70px;height:0.70px;background:#b5b1b1;"></div>
<div style="left:268.80px;top:224.05px;width:1.80px;height:0.70px;background:#b5b1b1;"></div>
<span style="left:258.10px;top:227.70px;font-size:4.50px;line-height:5.40px;color:#f0f0f0;font-weight:bold;">-24</span>
<div style="left:265.50px;top:230.05px;width:1.70px;height:0.70px;background:#b5b1b1;"></div>
<div style="left:268.80px;top:230.05px;width:1.80px;height:0.70px;background:#b5b1b1;"></div>
<span style="left:258.10px;top:233.30px;font-size:4.50px;line-height:5.40px;color:#f0f0f0;font-weight:bold;">-27</span>
<div style="left:265.50px;top:235.65px;width:1.70px;height:0.70px;background:#b5b1b1;"></div>
<div style="left:268.80px;top:235.65px;width:1.80px;height:0.70px;background:#b5b1b1;"></div>
<span style="left:258.10px;top:239.80px;font-size:4.50px;line-height:5.40px;color:#f0f0f0;font-weight:bold;">-37</span>
<div style="left:265.50px;top:242.15px;width:1.70px;height:0.70px;background:#b5b1b1;"></div>
<div style="left:268.80px;top:242.15px;width:1.80px;height:0.70px;background:#b5b1b1;"></div>
<span style="left:258.10px;top:246.90px;font-size:4.50px;line-height:5.40px;color:#f0f0f0;font-weight:bold;">-42</span>
<div style="left:265.50px;top:249.25px;width:1.70px;height:0.70px;background:#b5b1b1;"></div>
<div style="left:268.80px;top:249.25px;width:1.80px;height:0.70px;background:#b5b1b1;"></div>
<span style="left:259.40px;top:255.48px;font-size:4.20px;line-height:5.04px;color:#eee;font-weight:bold;">-∞</span>
<div style="left:269.00px;top:74px;width:1.6px;height:184px;background:repeating-linear-gradient(180deg,rgba(170,166,166,.45) 0 .6px,transparent .6px 2.45px);"></div>
<div style="left:272.40px;top:258.20px;width:24.00px;height:0.90px;background:#bdb9b9;"></div>
<span style="left:258.60px;top:271.90px;font-size:5.16px;line-height:6.20px;color:#eee;font-weight:bold;">A3</span>
<span style="left:273.20px;top:271.59px;font-size:4.86px;line-height:5.83px;color:#f2f2f2;font-weight:bold;">Audio 3</span>
<div style="left:299.10px;top:19.00px;width:41.00px;height:270.00px;background:#4e4746;"></div>
<div style="left:314.90px;top:22.80px;width:8.40px;height:8.40px;background:#5e5857;border-radius:50%;"></div>
<div style="left:316.90px;top:24.80px;width:4.40px;height:4.40px;background:#544e4d;border-radius:50%;"></div>
<span style="left:311.50px;top:33.84px;font-size:4.60px;line-height:5.52px;color:#a8a4a4;font-weight:bold;">L</span>
<div style="left:314.90px;top:37.30px;width:7.60px;height:0.70px;background:#8a8686;"></div>
<span style="left:323.50px;top:33.84px;font-size:4.60px;line-height:5.52px;color:#dcdcdc;font-weight:bold;">R</span>
<span style="left:315.90px;top:40.72px;font-size:5.47px;line-height:6.56px;color:#c8c8c8;font-weight:bold;">0.0</span>
<span style="left:309.30px;top:54.24px;font-size:4.60px;line-height:5.52px;color:#ddd;font-weight:bold;">M</span>
<span style="left:318.10px;top:54.24px;font-size:4.60px;line-height:5.52px;color:#ddd;font-weight:bold;">S</span>
<div style="left:326.70px;top:55.10px;width:3.80px;height:3.80px;background:transparent;border:.8px solid #bbb;border-radius:50%;box-sizing:border-box;"></div>
<div style="left:315.10px;top:73.40px;width:24.00px;height:184.80px;background:#030202;"></div>
<div style="left:302.10px;top:66.00px;width:13.00px;height:195.00px;background:#433c3b;"></div>
<span style="left:302.50px;top:66.92px;font-size:3.80px;line-height:4.56px;color:#eeeeee;font-weight:bold;">dB</span>
<div style="left:310.20px;top:73px;width:.9px;height:185px;background:repeating-linear-gradient(180deg,#2a2525 0 1.4px,transparent 1.4px 2.3px);"></div>
<span style="left:304.80px;top:71.30px;font-size:4.50px;line-height:5.40px;color:#f0f0f0;font-weight:bold;">6</span>
<div style="left:308.20px;top:73.65px;width:1.70px;height:0.70px;background:#b5b1b1;"></div>
<div style="left:311.50px;top:73.65px;width:1.80px;height:0.70px;background:#b5b1b1;"></div>
<span style="left:304.80px;top:77.80px;font-size:4.50px;line-height:5.40px;color:#f0f0f0;font-weight:bold;">5</span>
<div style="left:308.20px;top:80.15px;width:1.70px;height:0.70px;background:#b5b1b1;"></div>
<div style="left:311.50px;top:80.15px;width:1.80px;height:0.70px;background:#b5b1b1;"></div>
<span style="left:304.80px;top:84.50px;font-size:4.50px;line-height:5.40px;color:#f0f0f0;font-weight:bold;">4</span>
<div style="left:308.20px;top:86.85px;width:1.70px;height:0.70px;background:#b5b1b1;"></div>
<div style="left:311.50px;top:86.85px;width:1.80px;height:0.70px;background:#b5b1b1;"></div>
<span style="left:304.80px;top:91.90px;font-size:4.50px;line-height:5.40px;color:#f0f0f0;font-weight:bold;">3</span>
<div style="left:308.20px;top:94.25px;width:1.70px;height:0.70px;background:#b5b1b1;"></div>
<div style="left:311.50px;top:94.25px;width:1.80px;height:0.70px;background:#b5b1b1;"></div>
<span style="left:304.80px;top:99.80px;font-size:4.50px;line-height:5.40px;color:#f0f0f0;font-weight:bold;">2</span>
<div style="left:308.20px;top:102.15px;width:1.70px;height:0.70px;background:#b5b1b1;"></div>
<div style="left:311.50px;top:102.15px;width:1.80px;height:0.70px;background:#b5b1b1;"></div>
<span style="left:304.80px;top:108.30px;font-size:4.50px;line-height:5.40px;color:#f0f0f0;font-weight:bold;">1</span>
<div style="left:308.20px;top:110.65px;width:1.70px;height:0.70px;background:#b5b1b1;"></div>
<div style="left:311.50px;top:110.65px;width:1.80px;height:0.70px;background:#b5b1b1;"></div>
<span style="left:304.80px;top:117.90px;font-size:4.50px;line-height:5.40px;color:#f0f0f0;font-weight:bold;">0</span>
<div style="left:308.20px;top:120.25px;width:1.70px;height:0.70px;background:#b5b1b1;"></div>
<div style="left:311.50px;top:120.25px;width:1.80px;height:0.70px;background:#b5b1b1;"></div>
<span style="left:303.30px;top:126.60px;font-size:4.50px;line-height:5.40px;color:#f0f0f0;font-weight:bold;">-1</span>
<div style="left:308.20px;top:128.95px;width:1.70px;height:0.70px;background:#b5b1b1;"></div>
<div style="left:311.50px;top:128.95px;width:1.80px;height:0.70px;background:#b5b1b1;"></div>
<span style="left:303.30px;top:135.30px;font-size:4.50px;line-height:5.40px;color:#f0f0f0;font-weight:bold;">-2</span>
<div style="left:308.20px;top:137.65px;width:1.70px;height:0.70px;background:#b5b1b1;"></div>
<div style="left:311.50px;top:137.65px;width:1.80px;height:0.70px;background:#b5b1b1;"></div>
<span style="left:303.30px;top:142.80px;font-size:4.50px;line-height:5.40px;color:#f0f0f0;font-weight:bold;">-3</span>
<div style="left:308.20px;top:145.15px;width:1.70px;height:0.70px;background:#b5b1b1;"></div>
<div style="left:311.50px;top:145.15px;width:1.80px;height:0.70px;background:#b5b1b1;"></div>
<span style="left:303.30px;top:156.30px;font-size:4.50px;line-height:5.40px;color:#f0f0f0;font-weight:bold;">-5</span>
<div style="left:308.20px;top:158.65px;width:1.70px;height:0.70px;background:#b5b1b1;"></div>
<div style="left:311.50px;top:158.65px;width:1.80px;height:0.70px;background:#b5b1b1;"></div>
<span style="left:303.30px;top:169.00px;font-size:4.50px;line-height:5.40px;color:#f0f0f0;font-weight:bold;">-7</span>
<div style="left:308.20px;top:171.35px;width:1.70px;height:0.70px;background:#b5b1b1;"></div>
<div style="left:311.50px;top:171.35px;width:1.80px;height:0.70px;background:#b5b1b1;"></div>
<span style="left:303.30px;top:180.10px;font-size:4.50px;line-height:5.40px;color:#f0f0f0;font-weight:bold;">-9</span>
<div style="left:308.20px;top:182.45px;width:1.70px;height:0.70px;background:#b5b1b1;"></div>
<div style="left:311.50px;top:182.45px;width:1.80px;height:0.70px;background:#b5b1b1;"></div>
<span style="left:300.80px;top:193.70px;font-size:4.50px;line-height:5.40px;color:#f0f0f0;font-weight:bold;">-12</span>
<div style="left:308.20px;top:196.05px;width:1.70px;height:0.70px;background:#b5b1b1;"></div>
<div style="left:311.50px;top:196.05px;width:1.80px;height:0.70px;background:#b5b1b1;"></div>
<span style="left:300.80px;top:205.10px;font-size:4.50px;line-height:5.40px;color:#f0f0f0;font-weight:bold;">-15</span>
<div style="left:308.20px;top:207.45px;width:1.70px;height:0.70px;background:#b5b1b1;"></div>
<div style="left:311.50px;top:207.45px;width:1.80px;height:0.70px;background:#b5b1b1;"></div>
<span style="left:300.80px;top:214.10px;font-size:4.50px;line-height:5.40px;color:#f0f0f0;font-weight:bold;">-18</span>
<div style="left:308.20px;top:216.45px;width:1.70px;height:0.70px;background:#b5b1b1;"></div>
<div style="left:311.50px;top:216.45px;width:1.80px;height:0.70px;background:#b5b1b1;"></div>
<span style="left:300.80px;top:221.70px;font-size:4.50px;line-height:5.40px;color:#f0f0f0;font-weight:bold;">-21</span>
<div style="left:308.20px;top:224.05px;width:1.70px;height:0.70px;background:#b5b1b1;"></div>
<div style="left:311.50px;top:224.05px;width:1.80px;height:0.70px;background:#b5b1b1;"></div>
<span style="left:300.80px;top:227.70px;font-size:4.50px;line-height:5.40px;color:#f0f0f0;font-weight:bold;">-24</span>
<div style="left:308.20px;top:230.05px;width:1.70px;height:0.70px;background:#b5b1b1;"></div>
<div style="left:311.50px;top:230.05px;width:1.80px;height:0.70px;background:#b5b1b1;"></div>
<span style="left:300.80px;top:233.30px;font-size:4.50px;line-height:5.40px;color:#f0f0f0;font-weight:bold;">-27</span>
<div style="left:308.20px;top:235.65px;width:1.70px;height:0.70px;background:#b5b1b1;"></div>
<div style="left:311.50px;top:235.65px;width:1.80px;height:0.70px;background:#b5b1b1;"></div>
<span style="left:300.80px;top:239.80px;font-size:4.50px;line-height:5.40px;color:#f0f0f0;font-weight:bold;">-37</span>
<div style="left:308.20px;top:242.15px;width:1.70px;height:0.70px;background:#b5b1b1;"></div>
<div style="left:311.50px;top:242.15px;width:1.80px;height:0.70px;background:#b5b1b1;"></div>
<span style="left:300.80px;top:246.90px;font-size:4.50px;line-height:5.40px;color:#f0f0f0;font-weight:bold;">-42</span>
<div style="left:308.20px;top:249.25px;width:1.70px;height:0.70px;background:#b5b1b1;"></div>
<div style="left:311.50px;top:249.25px;width:1.80px;height:0.70px;background:#b5b1b1;"></div>
<span style="left:302.10px;top:255.48px;font-size:4.20px;line-height:5.04px;color:#eee;font-weight:bold;">-∞</span>
<div style="left:311.70px;top:74px;width:1.6px;height:184px;background:repeating-linear-gradient(180deg,rgba(170,166,166,.45) 0 .6px,transparent .6px 2.45px);"></div>
<div style="left:315.10px;top:258.20px;width:24.00px;height:0.90px;background:#bdb9b9;"></div>
<span style="left:301.30px;top:271.90px;font-size:5.16px;line-height:6.20px;color:#eee;font-weight:bold;">A4</span>
<span style="left:315.90px;top:271.59px;font-size:4.86px;line-height:5.83px;color:#f2f2f2;font-weight:bold;">Audio 4</span>
<div style="left:176.00px;top:117.60px;width:9.00px;height:8.40px;background:#e9e6e6;border-radius:1px;box-shadow:0 0 1px #000;"></div>
<div style="left:176.50px;top:121.40px;width:8.00px;height:0.90px;background:#777;"></div>
<div style="left:186.4px;top:167px;width:25.8px;height:91.2px;background:linear-gradient(180deg,#f7f03a 0%,#e4ea3a 12%,#b5e23e 32%,#74dc42 52%,#48d83e 70%,#36d838 100%);"></div>
<div style="left:198.90px;top:167.00px;width:0.80px;height:91.20px;background:rgba(255,255,255,.18);"></div>
<div style="left:185.40px;top:161.30px;width:27.00px;height:1.30px;background:#f2f2f2;"></div>
<span style="left:175.00px;top:262.58px;font-size:5.04px;line-height:6.04px;color:#5fb2e2;font-weight:bold;">0.0</span>
<span style="left:195.00px;top:262.67px;font-size:4.88px;line-height:5.85px;color:#cfcfcf;font-weight:bold;">-1.8</span>
<div style="left:170.50px;top:281.00px;width:5.50px;height:7.00px;background:#625c5b;"></div>
<div style="left:338.00px;top:281.00px;width:5.50px;height:7.00px;background:#625c5b;"></div>
<div style="left:167.00px;top:290.40px;width:633.00px;height:2.00px;background:#171414;"></div>
<div style="left:352.40px;top:5.60px;width:1.80px;height:285.00px;background:#141112;"></div>
<div style="left:354.20px;top:5.60px;width:156.00px;height:12.00px;background:#494241;"></div>
<span style="left:359.50px;top:9.58px;font-size:4.53px;line-height:5.44px;color:#fff;font-weight:bold;">Effect Controls</span>
<span style="left:396.50px;top:9.30px;font-size:5.00px;line-height:6.00px;color:#ccc;">≡</span>
<span style="left:357.50px;top:26.35px;font-size:4.76px;line-height:5.71px;color:#e4e4e4;font-weight:bold;">Master * LIVE ROOM...</span>
<svg style="left:412.50px;top:27.80px" width="3.6" height="2.4" viewBox="0 0 3.6 2.4"><path d="M0 0h3.6L1.8 2.4z" fill="#ddd"/></svg>
<div style="left:419.50px;top:25.80px;width:46.00px;height:6.20px;background:rgba(25,70,115,.6);filter:blur(.9px);"></div>
<span style="left:420.50px;top:25.98px;font-size:4.70px;line-height:5.64px;color:#62b6f0;font-weight:bold;">LIVE ROOM CLIP ...</span>
<svg style="left:471.30px;top:26.80px" width="2.6" height="3.6" viewBox="0 0 2.6 3.6"><path d="M0 0L2.6 1.8L0 3.6z" fill="#eee"/></svg>
<div style="left:355.50px;top:35.20px;width:121.00px;height:6.40px;background:#413b3a;"></div>
<span style="left:358.50px;top:35.96px;font-size:4.73px;line-height:5.68px;color:#f0f0f0;font-weight:bold;">Audio Effects</span>
<svg style="left:470.8px;top:36.6px" width="3.6" height="2.6" viewBox="0 0 3.6 2.6"><path d="M0 2.6h3.6L1.8 0z" fill="#ddd"/></svg>
<svg style="left:357.40px;top:45.80px" width="2.4" height="3.6" viewBox="0 0 2.4 3.6"><path d="M0 0L2.4 1.8L0 3.6z" fill="#ddd"/></svg>
<span style="left:365.60px;top:45.02px;font-size:4.80px;line-height:5.76px;color:#ddd;font-weight:bold;font-style:italic;">fx</span>
<span style="left:372.30px;top:44.60px;font-size:5.00px;line-height:6.00px;color:#e8e8e8;font-weight:bold;">Volume</span>
<svg style="left:357.40px;top:55.40px" width="2.4" height="3.6" viewBox="0 0 2.4 3.6"><path d="M0 0L2.4 1.8L0 3.6z" fill="#ddd"/></svg>
<span style="left:365.60px;top:54.42px;font-size:4.80px;line-height:5.76px;color:#ddd;font-weight:bold;font-style:italic;">fx</span>
<span style="left:372.30px;top:54.24px;font-size:4.93px;line-height:5.91px;color:#e8e8e8;font-weight:bold;">Panner</span>
<svg style="left:468px;top:43.5px" width="7" height="6.5" viewBox="0 0 7 6.5"><path d="M1.6 3.4A2.2 2.2 0 1 0 3.6 1" fill="none" stroke="#eee" stroke-width="1.1"/><path d="M0 3h3.4L1.7 5z" fill="#eee"/></svg>
<span style="left:480.50px;top:24.72px;font-size:3.80px;line-height:4.56px;color:#ddd;font-weight:bold;">00:00</span>
<div style="left:477.80px;top:33.80px;width:23.40px;height:9.00px;background:#27cf78;border:.7px solid #9be8c0;box-sizing:border-box;"></div>
<span style="left:479.50px;top:36.28px;font-size:3.20px;line-height:3.84px;color:#1a8a52;">LIVE ROO</span>
<div style="left:491.60px;top:30.00px;width:1.70px;height:242.00px;background:#8b95ab;"></div>
<div style="left:490.60px;top:25.80px;width:4.20px;height:6.00px;background:#3aa0e0;border-radius:.8px;"></div>
<div style="left:497.00px;top:19.00px;width:11.50px;height:256.00px;background:#443d3c;"></div>
<div style="left:501.40px;top:19.00px;width:7.00px;height:256.00px;background:#3b3535;"></div>
<div style="left:479.00px;top:277.50px;width:8.00px;height:4.50px;background:#5c5655;"></div>
<div style="left:494.00px;top:277.50px;width:8.00px;height:4.50px;background:#5c5655;"></div>
<div style="left:356.00px;top:283.80px;width:28.50px;height:5.40px;background:rgba(30,105,165,.7);filter:blur(.8px);"></div>
<span style="left:356.60px;top:283.72px;font-size:4.80px;line-height:5.76px;color:#84cffa;font-weight:bold;transform-origin:0 50%;transform:scaleX(1.048);">00;00;06;14</span>
<svg style="left:480.5px;top:283px" width="8" height="6.5" viewBox="0 0 8 6.5"><path d="M0 .8L3.4 3.2L0 5.6z" fill="#eee"/><path d="M4.2 5.8L6.6 .6" stroke="#eee" stroke-width="1"/></svg>
<svg style="left:493px;top:282.6px" width="8.5" height="7" viewBox="0 0 8.5 7"><path d="M.8 3.6V6.2H7.6V3.6H5.4" fill="none" stroke="#eee" stroke-width="1.1"/><path d="M3 5V1.8H1.8L3.8 0L5.8 1.8H4.4" fill="none" stroke="#eee" stroke-width=".9"/></svg>
<div style="left:510.30px;top:5.60px;width:1.80px;height:285.00px;background:#141112;"></div>
<span style="left:516.70px;top:9.49px;font-size:4.68px;line-height:5.61px;color:#f4f4f4;font-weight:bold;">Program: LIVE ROOM CLIP</span>
<span style="left:581.50px;top:9.30px;font-size:5.00px;line-height:6.00px;color:#ccc;">≡</span>
<div style="left:512.00px;top:42.20px;width:288.00px;height:183.00px;background:#030203;"></div>
<div style="left:512.00px;top:225.20px;width:288.00px;height:5.60px;background:#474545;"></div>
<div style="left:515.50px;top:250.60px;width:36.50px;height:6.80px;background:rgba(30,105,165,.75);filter:blur(.9px);"></div>
<span style="left:516.50px;top:250.64px;font-size:5.60px;line-height:6.72px;color:#84cffa;font-weight:bold;transform-origin:0 50%;transform:scaleX(1.147);">00;00;06;14</span>
<div style="left:560.00px;top:249.60px;width:31.00px;height:8.60px;background:#484140;"></div>
<span style="left:562.60px;top:251.80px;font-size:4.00px;line-height:4.80px;color:#e8e8e8;font-weight:bold;">Fit</span>
<svg style="left:582.70px;top:252.90px" width="3.8" height="2.6" viewBox="0 0 3.8 2.6"><path d="M0 0h3.8L1.9 2.6z" fill="#eee"/></svg>
<div style="left:752.50px;top:249.60px;width:28.50px;height:8.60px;background:#484140;"></div>
<span style="left:755.00px;top:251.68px;font-size:4.20px;line-height:5.04px;color:#e8e8e8;font-weight:bold;">Full</span>
<svg style="left:774.10px;top:252.90px" width="3.8" height="2.6" viewBox="0 0 3.8 2.6"><path d="M0 0h3.8L1.9 2.6z" fill="#eee"/></svg>
<svg style="left:784px;top:250px" width="9" height="9" viewBox="0 0 9 9"><path d="M1.2 1.2a2 2 0 0 1 3 2L8 7.2L7 8.2L3 4.2a2 2 0 0 1-2.4-2.4L2 3L3 2z" fill="#eee"/></svg>
<div style="left:797.50px;top:250.50px;width:3.00px;height:7.00px;background:#ddd;border-radius:1px;"></div>
<div style="left:516px;top:265.4px;width:284px;height:3.4px;background:repeating-linear-gradient(90deg,rgba(150,146,146,.3) 0 .8px,transparent .8px 5.35px);"></div>
<div style="left:516.00px;top:267.00px;width:284.00px;height:0.70px;background:rgba(120,116,116,.3);"></div>
<div style="left:515.00px;top:267.00px;width:3.40px;height:6.00px;background:#625c5b;"></div>
<div style="left:722.60px;top:262.60px;width:6.80px;height:6.80px;background:#3fa6dc;border-radius:1px;"></div>
<svg style="left:591.70px;top:280.80px" width="5.4" height="5" viewBox="0 0 5.4 5"><path d="M0 0h5.4L2.7 5z" fill="#eee"/></svg>
<div style="left:610.60px;top:280.30px;width:1.00px;height:6.00px;background:#ddd;"></div>
<div style="left:625.00px;top:280.30px;width:1.00px;height:6.00px;background:#ddd;"></div>
<div style="left:641.00px;top:280.50px;width:1.00px;height:5.60px;background:#eee;"></div>
<svg style="left:642.10px;top:281.30px" width="3.4" height="4" viewBox="0 0 3.4 4"><path d="M0 0L3.4 2.0L0 4z" fill="#eee"/></svg>
<div style="left:641.60px;top:282.80px;width:3.00px;height:1.00px;background:#eee;"></div>
<svg style="left:656.70px;top:280.80px" width="4.6" height="5" viewBox="0 0 4.6 5"><path d="M4.6 0L0 2.5L4.6 5z" fill="#eee"/></svg>
<div style="left:672.00px;top:280.70px;width:5.20px;height:5.20px;background:#eee;"></div>
<svg style="left:687.70px;top:280.80px" width="4.6" height="5" viewBox="0 0 4.6 5"><path d="M0 0L4.6 2.5L0 5z" fill="#eee"/></svg>
<svg style="left:702.00px;top:280.80px" width="4" height="5" viewBox="0 0 4 5"><path d="M0 0L4 2.5L0 5z" fill="#eee"/></svg>
<div style="left:706.40px;top:280.50px;width:1.00px;height:5.60px;background:#eee;"></div>
<svg style="left:719.5px;top:280.1px" width="9" height="6.5" viewBox="0 0 9 6.5"><path d="M0 6.5V3.5h2L3 0.6h3L7 3.5h2V6.5H6V4H3v2.5z" fill="#e8e8e8"/></svg>
<svg style="left:735px;top:280.1px" width="9" height="6.5" viewBox="0 0 9 6.5"><path d="M0 6.5V3.5h2L3 0.6h3L7 3.5h2V6.5H6V3L4.5 1.6L3 3v3.5z" fill="#e8e8e8"/></svg>
<svg style="left:750.5px;top:280.3px" width="8.5" height="6" viewBox="0 0 8.5 6"><rect x="0" y=".8" width="8.5" height="5.2" rx="1" fill="#e8e8e8"/><circle cx="4.25" cy="3.4" r="1.4" fill="#777"/></svg>
<div style="left:183.20px;top:292.40px;width:1.60px;height:157.60px;background:#151212;"></div>
<div style="left:184.60px;top:292.40px;width:0.70px;height:157.60px;background:#77706f;"></div>
<svg style="left:171.30px;top:299.00px" width="6" height="8" viewBox="0 0 6 8"><path d="M1.4 .6V6.4L2.8 5.2L3.8 7.4L4.8 7L3.8 4.8H5.6z" fill="none" stroke="#4aa8ec" stroke-width=".9"/></svg>
<svg style="left:170.30px;top:309.00px" width="8" height="6" viewBox="0 0 8 6"><path d="M.5 1h4M.5 3h5.5M4.5 1.4L6.5 3L4.5 4.6M.5 5h4" fill="none" stroke="#e6e6e6" stroke-width=".9"/></svg>
<svg style="left:170.30px;top:318.50px" width="8" height="6" viewBox="0 0 8 6"><path d="M7 .6V5.4M6 3H1M2.6 1.4L1 3L2.6 4.6" fill="none" stroke="#e6e6e6" stroke-width="1"/></svg>
<svg style="left:170.30px;top:327.50px" width="8" height="7" viewBox="0 0 8 7"><path d="M4 .4V6.6M.6 3.5H7.4M2 2.2L.6 3.5L2 4.8M6 2.2L7.4 3.5L6 4.8" fill="none" stroke="#e6e6e6" stroke-width=".9"/></svg>
<svg style="left:170.30px;top:336.50px" width="8" height="7" viewBox="0 0 8 7"><path d="M3 .4V6.6M5 .4V6.6M.4 3.5H7.6M1.8 2.2L.4 3.5L1.8 4.8M6.2 2.2L7.6 3.5L6.2 4.8" fill="none" stroke="#e6e6e6" stroke-width=".9"/></svg>
<svg style="left:170.30px;top:345.50px" width="8" height="7" viewBox="0 0 8 7"><path d="M.6 2h3.4M2.6 .8L4 2L2.6 3.2M4.6 .4V6.6M5 5h2.6" fill="none" stroke="#e6e6e6" stroke-width=".9"/></svg>
<svg style="left:170.30px;top:354.00px" width="8" height="8" viewBox="0 0 8 8"><path d="M4.6 .8L7.2 3.4L3.4 7.2L.8 4.6z" fill="#e6e6e6"/><path d="M3.4 3L5 4.6" stroke="#4a4140" stroke-width=".8"/></svg>
<svg style="left:169.80px;top:363.50px" width="9" height="7" viewBox="0 0 9 7"><path d="M.8 .4V6.6M8.2 .4V6.6M1.4 3.5H7.6M2.8 2.2L1.4 3.5L2.8 4.8M6.2 2.2L7.6 3.5L6.2 4.8" fill="none" stroke="#e6e6e6" stroke-width=".9"/></svg>
<svg style="left:169.80px;top:372.50px" width="9" height="7" viewBox="0 0 9 7"><path d="M3.6 .4V6.6M5.4 .4V6.6M.4 3.5H3M6 3.5H8.6M1.6 2.4L3 3.5L1.6 4.6M7.4 2.4L6 3.5L7.4 4.6" fill="none" stroke="#e6e6e6" stroke-width=".9"/></svg>
<svg style="left:170.30px;top:381.00px" width="8" height="8" viewBox="0 0 8 8"><path d="M5.6 .6L7.4 2.4L3 6.8L.6 7.4L1.2 5z" fill="#e6e6e6"/></svg>
<svg style="left:170.30px;top:390.00px" width="8" height="8" viewBox="0 0 8 8"><path d="M1.4 3.4V1.8q.6-.7 1.1 0V1.2q.6-.7 1.2 0V1q.6-.7 1.2 0v.6q.6-.6 1.1 0V5.2Q5.8 7.6 3.6 7.4Q1.8 7.2 .8 4.6q0-.9 .6-1.2z" fill="#e6e6e6"/></svg>
<svg style="left:170.30px;top:399.50px" width="8" height="8" viewBox="0 0 8 8"><circle cx="3.2" cy="3.2" r="2.2" fill="none" stroke="#e6e6e6" stroke-width="1.2"/><path d="M4.8 4.8L7.4 7.4" stroke="#e6e6e6" stroke-width="1.4"/></svg>
<div style="left:185.30px;top:292.40px;width:614.70px;height:151.00px;background:#4a4140;"></div>
<svg style="left:188.60px;top:297.50px" width="2.4" height="3.4" viewBox="0 0 2.4 3.4"><path d="M2.4 0L0 1.7L2.4 3.4z" fill="#ccc"/></svg>
<span style="left:196.00px;top:295.84px;font-size:5.60px;line-height:6.72px;color:#f2f2f2;font-weight:bold;transform-origin:0 50%;transform:scaleX(0.809);">LIVE ROOM CLIP</span>
<span style="left:237.50px;top:296.20px;font-size:5.00px;line-height:6.00px;color:#ccc;">≡</span>
<span style="left:188.00px;top:304.92px;font-size:8.80px;line-height:10.56px;color:#33b0f0;font-weight:bold;transform-origin:0 50%;transform:scaleX(0.845);text-shadow:0 0 1.2px #1f84c8;">00;00;06;14</span>
<svg style="left:188.50px;top:317.00px" width="7" height="7" viewBox="0 0 7 7"><path d="M3.5 .3V6.7M.6 1.8L6.4 5.2M6.4 1.8L.6 5.2" stroke="#36a9e8" stroke-width="1.1"/></svg>
<svg style="left:202.50px;top:317.00px" width="7" height="7" viewBox="0 0 7 7"><path d="M5.8 1.6H3.2a1.9 1.9 0 0 0 0 3.8H5.8" fill="none" stroke="#36a9e8" stroke-width="1.6"/></svg>
<svg style="left:217.50px;top:316.50px" width="8" height="8" viewBox="0 0 8 8"><path d="M1 1.2H6.4V6H1z" fill="none" stroke="#eee" stroke-width="1.1"/><path d="M3.8 3.4H7.4V7.4H3.8z" fill="#4a4140" stroke="#eee" stroke-width=".9"/></svg>
<svg style="left:234.50px;top:318.20px" width="4" height="4.6" viewBox="0 0 4 4.6"><path d="M0 0h4L2.0 4.6z" fill="#eee"/></svg>
<svg style="left:247.50px;top:316.50px" width="8" height="8" viewBox="0 0 8 8"><path d="M1 1a2 2 0 0 1 3 2L7.4 6.4L6.4 7.4L3 4a2 2 0 0 1-2.4-2.4L2 3L3 2z" fill="#eee"/></svg>
<div style="left:207.60px;top:324.80px;width:14.00px;height:117.60px;background:#1b8eea;"></div>
<div style="left:207.60px;top:348.80px;width:14.00px;height:1.00px;background:#1466ad;"></div>
<div style="left:207.60px;top:412.20px;width:14.00px;height:0.80px;background:#1a7ed2;"></div>
<span style="left:211.50px;top:333.60px;font-size:4.00px;line-height:4.80px;color:#3ea4f2;font-weight:bold;">V1</span>
<span style="left:211.50px;top:365.10px;font-size:4.00px;line-height:4.80px;color:#49aaf3;font-weight:bold;">A1</span>
<span style="left:211.50px;top:427.60px;font-size:4.00px;line-height:4.80px;color:#49aaf3;font-weight:bold;">A2</span>
<svg style="left:200.50px;top:332.00px" width="4.4" height="5.4" viewBox="0 0 4.4 5.4"><path d="M1.1 2.4V1.6a1.1 1.1 0 0 1 2.2 0v.8" fill="none" stroke="#eee" stroke-width=".8"/><rect x=".2" y="2.4" width="4" height="3" fill="#eee"/></svg>
<svg style="left:200.50px;top:364.00px" width="4.4" height="5.4" viewBox="0 0 4.4 5.4"><path d="M1.1 2.4V1.6a1.1 1.1 0 0 1 2.2 0v.8" fill="none" stroke="#eee" stroke-width=".8"/><rect x=".2" y="2.4" width="4" height="3" fill="#eee"/></svg>
<svg style="left:200.50px;top:427.00px" width="4.4" height="5.4" viewBox="0 0 4.4 5.4"><path d="M1.1 2.4V1.6a1.1 1.1 0 0 1 2.2 0v.8" fill="none" stroke="#eee" stroke-width=".8"/><rect x=".2" y="2.4" width="4" height="3" fill="#eee"/></svg>
<div style="left:224.50px;top:324.60px;width:5.00px;height:2.60px;background:#cfcfcf;border-radius:.6px;"></div>
<svg style="left:232.50px;top:324.20px" width="5" height="3.6" viewBox="0 0 5 3.6"><ellipse cx="2.5" cy="1.8" rx="2.1" ry="1.3" fill="none" stroke="#ddd" stroke-width=".8"/></svg>
<span style="left:224.60px;top:334.66px;font-size:4.24px;line-height:5.09px;color:#e8e8e8;font-weight:bold;">Video 1</span>
<div style="left:225.00px;top:353.80px;width:5.00px;height:4.00px;background:transparent;border:.8px solid #ddd;box-sizing:border-box;border-radius:.6px;"></div>
<span style="left:233.40px;top:353.28px;font-size:4.20px;line-height:5.04px;color:#ddd;font-weight:bold;">M</span>
<span style="left:241.40px;top:353.28px;font-size:4.20px;line-height:5.04px;color:#ddd;font-weight:bold;">S</span>
<span style="left:224.40px;top:364.58px;font-size:4.36px;line-height:5.24px;color:#e8e8e8;font-weight:bold;">Audio 1</span>
<svg style="left:225.00px;top:376.30px" width="4" height="4" viewBox="0 0 4 4"><path d="M2 0L4 2L2 4L0 2z" fill="#ddd"/></svg>
<svg style="left:233.00px;top:376.60px" width="2.4" height="3.4" viewBox="0 0 2.4 3.4"><path d="M2.4 0L0 1.7L2.4 3.4z" fill="#bbb"/></svg>
<div style="left:240.40px;top:376.70px;width:3.20px;height:3.20px;background:transparent;border:.7px solid #ccc;box-sizing:border-box;border-radius:50%;"></div>
<svg style="left:248.80px;top:376.60px" width="2.4" height="3.4" viewBox="0 0 2.4 3.4"><path d="M0 0L2.4 1.7L0 3.4z" fill="#ddd"/></svg>
<div style="left:225.00px;top:416.40px;width:5.00px;height:4.00px;background:transparent;border:.8px solid #ddd;box-sizing:border-box;border-radius:.6px;"></div>
<span style="left:233.40px;top:415.88px;font-size:4.20px;line-height:5.04px;color:#ddd;font-weight:bold;">M</span>
<span style="left:241.40px;top:415.88px;font-size:4.20px;line-height:5.04px;color:#ddd;font-weight:bold;">S</span>
<span style="left:224.40px;top:427.38px;font-size:4.36px;line-height:5.24px;color:#e8e8e8;font-weight:bold;">Audio 2</span>
<svg style="left:225.00px;top:437.60px" width="4" height="4" viewBox="0 0 4 4"><path d="M2 0L4 2L2 4L0 2z" fill="#ddd"/></svg>
<svg style="left:233.00px;top:437.90px" width="2.4" height="3.4" viewBox="0 0 2.4 3.4"><path d="M2.4 0L0 1.7L2.4 3.4z" fill="#bbb"/></svg>
<div style="left:240.40px;top:438.00px;width:3.20px;height:3.20px;background:transparent;border:.7px solid #ccc;box-sizing:border-box;border-radius:50%;"></div>
<svg style="left:248.80px;top:437.90px" width="2.4" height="3.4" viewBox="0 0 2.4 3.4"><path d="M0 0L2.4 1.7L0 3.4z" fill="#ddd"/></svg>
<span style="left:266.00px;top:311.69px;font-size:4.84px;line-height:5.81px;color:#e8e8e8;font-weight:bold;">;00;00</span>
<span style="left:308.40px;top:311.47px;font-size:5.21px;line-height:6.26px;color:#e8e8e8;font-weight:bold;">00;00;02;00</span>
<span style="left:365.50px;top:311.47px;font-size:5.21px;line-height:6.26px;color:#e8e8e8;font-weight:bold;">00;00;04;00</span>
<span style="left:422.60px;top:311.47px;font-size:5.21px;line-height:6.26px;color:#e8e8e8;font-weight:bold;">00;00;06;00</span>
<span style="left:479.70px;top:311.47px;font-size:5.21px;line-height:6.26px;color:#e8e8e8;font-weight:bold;">00;00;08;00</span>
<span style="left:536.80px;top:311.47px;font-size:5.21px;line-height:6.26px;color:#e8e8e8;font-weight:bold;">00;00;10;00</span>
<span style="left:593.90px;top:311.47px;font-size:5.21px;line-height:6.26px;color:#e8e8e8;font-weight:bold;">00;00;12;00</span>
<span style="left:651.00px;top:311.47px;font-size:5.21px;line-height:6.26px;color:#e8e8e8;font-weight:bold;">00;00;14;00</span>
<span style="left:708.10px;top:311.47px;font-size:5.21px;line-height:6.26px;color:#e8e8e8;font-weight:bold;">00;00;16;00</span>
<span style="left:765.20px;top:311.47px;font-size:5.21px;line-height:6.26px;color:#e8e8e8;font-weight:bold;">00;00;18;00</span>
<div style="left:265.5px;top:320.4px;width:534.5px;height:7px;background:repeating-linear-gradient(90deg,rgba(170,166,166,.3) 0 .8px,transparent .8px 2px);"></div>
<div style="left:265.20px;top:351.20px;width:278.40px;height:61.40px;background:#21d27b;border:1px solid #f3f6f1;box-sizing:border-box;"></div>
<svg style="left:265.2px;top:351.2px" width="278.4" height="61.4" viewBox="0 0 278.4 61.4"><path d="M1.00 61.00 L1.00 56.60 L10.36 56.37 L11.61 40.49 L14.26 15.59 L15.81 17.15 L18.15 28.04 L20.48 31.15 L23.59 45.16 L25.31 54.19 L26.71 55.43 L27.64 54.19 L27.95 40.49 L29.04 14.03 L29.82 10.92 L30.91 18.70 L32.15 21.82 L36.05 28.04 L39.94 38.94 L42.43 51.70 L43.83 53.88 L45.07 51.70 L46.16 46.72 L49.27 34.27 L52.39 20.26 L54.72 26.48 L57.06 28.82 L60.17 40.49 L62.04 51.70 L63.28 53.88 L64.37 51.08 L65.62 45.16 L67.95 37.38 L69.51 24.93 L71.84 15.59 L75.73 21.82 L78.85 34.27 L81.96 48.27 L85.07 54.50 L91.30 56.06 L92.85 40.49 L94.80 17.15 L97.13 15.59 L99.47 24.93 L101.03 26.48 L103.36 18.70 L105.69 13.26 L108.03 20.26 L110.36 27.26 L111.92 14.03 L114.26 15.59 L118.15 21.82 L120.48 31.15 L122.82 38.16 L125.15 24.93 L127.48 28.82 L129.82 20.26 L132.15 17.15 L133.71 35.82 L136.05 28.04 L138.38 10.92 L140.71 24.93 L142.27 38.94 L144.29 21.82 L146.16 35.82 L148.50 48.27 L150.83 55.28 L164.84 55.28 L166.08 32.71 L166.71 17.15 L167.95 34.27 L171.06 46.72 L174.18 53.72 L183.52 54.50 L184.76 32.71 L185.54 14.03 L187.41 34.27 L190.52 49.83 L194.41 55.28 L202.19 55.28 L203.28 32.71 L204.06 15.59 L205.62 32.71 L208.42 46.72 L211.53 53.72 L214.80 55.28 L220.91 54.81 L222.15 32.71 L222.93 10.92 L224.96 34.27 L227.60 48.27 L231.49 54.50 L240.05 54.81 L241.14 32.71 L242.08 17.15 L243.94 34.27 L247.06 46.72 L251.73 53.72 L257.95 54.19 L261.06 52.94 L264.18 54.50 L267.29 52.63 L271.96 55.28 L276.63 55.75 L277.4 61z" fill="#f8ebeb" stroke="#f8ebeb" stroke-width=".4" stroke-linejoin="round"/><path d="M1 30.8H277.4" stroke="rgba(235,245,238,.55)" stroke-width=".6"/><rect x="1.6" y="1.4" width="4.6" height="3.6" fill="#7fd9ad"/><rect x="3.6" y="55.4" width="4.6" height="3.4" fill="#2a5a40"/></svg>
<div style="left:448.90px;top:319.00px;width:1.50px;height:123.40px;background:#a2acc6;"></div>
<svg style="left:447.1px;top:318.2px" width="5.2" height="5.6" viewBox="0 0 5.2 5.6"><path d="M.4 .4H4.8V3.4L2.6 5.3L.4 3.4z" fill="#3b9fe4" stroke="#8cc8f0" stroke-width=".6"/></svg>
<div style="left:185.30px;top:443.20px;width:614.70px;height:5.40px;background:#282425;"></div>
<div style="left:185.30px;top:443.00px;width:79.40px;height:5.50px;background:#5d5756;"></div>
<div style="left:185.30px;top:448.60px;width:614.70px;height:1.40px;background:#a6cdea;"></div>
</div></body></html>
